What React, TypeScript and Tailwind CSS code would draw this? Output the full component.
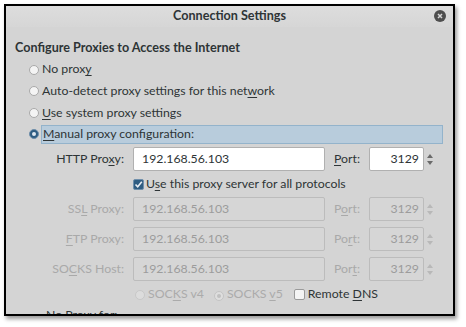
import React from 'react';

const U = ({ children }: { children: React.ReactNode }) => <span className="underline underline-offset-2">{children}</span>;

const Radio = ({ checked = false, disabled = false }: { checked?: boolean; disabled?: boolean }) => (
  <span
    className={`inline-flex items-center justify-center w-[10px] h-[10px] rounded-full shrink-0 ${
      checked
        ? disabled
          ? 'bg-[#dedede] border border-[#c4c4c4]'
          : 'bg-[#2f5d82] border border-[#6f8fab]'
        : disabled
          ? 'bg-[#dcdcdc] border border-[#c8c8c8]'
          : 'bg-[#f4f4f4] border border-[#a9a9a9]'
    }`}
  >
    {checked && <span className={`w-[4px] h-[4px] rounded-full ${disabled ? 'bg-[#c0c0c0]' : 'bg-[#dfe8f0]'}`} />}
  </span>
);

const Spinner = ({ disabled = false }: { disabled?: boolean }) => (
  <div className="w-[12px] h-full flex flex-col items-center justify-center gap-[3px]">
    <svg width="6" height="4" viewBox="0 0 6 4">
      <path d="M3 0 L6 4 L0 4 Z" fill={disabled ? '#b8b8b8' : '#6a6a6a'} />
    </svg>
    <svg width="6" height="4" viewBox="0 0 6 4">
      <path d="M0 0 L6 0 L3 4 Z" fill={disabled ? '#b8b8b8' : '#6a6a6a'} />
    </svg>
  </div>
);

interface ProxyRowProps {
  label: React.ReactNode;
  port: React.ReactNode;
  disabled?: boolean;
}

const ProxyRow: React.FC<ProxyRowProps> = ({ label, port, disabled = false }) => (
  <div className="flex items-center h-[24px]">
    <div className={`w-[118px] text-right ${disabled ? 'text-[#a9a9a9]' : 'text-[#2e3436]'}`}>{label}</div>
    <div
      className={`ml-[9px] w-[192px] h-full flex items-center pl-[8px] border rounded-[2px] ${
        disabled ? 'bg-[#d6d6d6] border-[#bcbcbc] text-[#9c9c9c]' : 'bg-white border-[#b0b0b0] text-[#2e3436]'
      }`}
    >
      192.168.56.103
    </div>
    <div className={`ml-[9px] w-[35px] ${disabled ? 'text-[#a9a9a9]' : 'text-[#2e3436]'}`}>{port}</div>
    <div
      className={`w-[55px] h-full flex items-center justify-end pr-[4px] border rounded-[2px] ${
        disabled ? 'bg-[#d6d6d6] border-[#bcbcbc] text-[#9c9c9c]' : 'bg-white border-[#b0b0b0] text-[#2e3436]'
      }`}
    >
      3129
    </div>
    <Spinner disabled={disabled} />
  </div>
);

export default function App() {
  return (
    <div className="w-[466px] h-[327px] bg-white pt-[4px] pl-[4px] overflow-hidden" style={{ fontFamily: 'Lato, "Noto Sans", sans-serif' }}>
      <div className="w-[451px] h-[312px] border-2 border-black bg-[#d4d4d4] overflow-hidden shadow-[2px_3px_4px_rgba(0,0,0,0.4)] text-[12.3px] text-[#2e3436] leading-none">
        {/* Title bar */}
        <div className="relative h-[21px] flex items-center justify-center bg-gradient-to-b from-[#dddddd] to-[#d6d6d6]">
          <span className="font-bold text-[12.6px]">Connection Settings</span>
          <span className="absolute right-[7px] top-[4px] w-[12px] h-[12px] rounded-full bg-[#4e4e4e] flex items-center justify-center">
            <svg width="6" height="6" viewBox="0 0 6 6">
              <path d="M1 1 L5 5 M5 1 L1 5" stroke="#d8d8d8" strokeWidth="1.5" />
            </svg>
          </span>
        </div>

        <div className="mt-[10px] h-[22px] flex items-center pl-[9px] font-bold text-[12.6px]">Configure Proxies to Access the Internet</div>

        <div className="flex flex-col pl-[23px]">
          <div className="h-[21px] flex items-center gap-[3px]">
            <Radio />
            <span>No prox<U>y</U></span>
          </div>
          <div className="h-[22px] flex items-center gap-[3px]">
            <Radio />
            <span>Auto-detect proxy settings for this net<U>w</U>ork</span>
          </div>
          <div className="h-[22px] flex items-center gap-[3px]">
            <Radio />
            <span><U>U</U>se system proxy settings</span>
          </div>
          <div className="h-[20px] flex items-center gap-[2px]">
            <Radio checked />
            <div className="flex-1 mr-[10px] h-[19px] flex items-center pl-[1px] bg-[#b8ccdc] border border-[#93b3cb]">
              <span><U>M</U>anual proxy configuration:</span>
            </div>
          </div>
        </div>

        <div className="mt-[3px]">
          <ProxyRow label={<span>HTTP Pro<U>x</U>y:</span>} port={<span><U>P</U>ort:</span>} />
        </div>

        <div className="h-[26px] flex items-center pl-[127px] gap-[2px]">
          <span className="w-[11px] h-[11px] rounded-[2px] bg-[#2f5d82] border border-[#6f8fab] flex items-center justify-center">
            <svg width="9" height="9" viewBox="0 0 9 9">
              <path d="M1.5 4.5 L3.7 6.8 L7.8 1.8" stroke="#e8eef4" strokeWidth="1.6" fill="none" />
            </svg>
          </span>
          <span>U<U>s</U>e this proxy server for all protocols</span>
        </div>

        <div className="flex flex-col gap-[6px]">
          <ProxyRow disabled label={<span>SS<U>L</U> Proxy:</span>} port={<span>P<U>o</U>rt:</span>} />
          <ProxyRow disabled label={<span><U>F</U>TP Proxy:</span>} port={<span>Po<U>r</U>t:</span>} />
          <ProxyRow disabled label={<span>SO<U>C</U>KS Host:</span>} port={<span>Por<U>t</U>:</span>} />
        </div>

        <div className="h-[27px] flex items-center pl-[129px]">
          <Radio disabled />
          <span className="ml-[3px] text-[#ababab]">SOC<U>K</U>S v4</span>
          <span className="ml-[10px]"><Radio checked disabled /></span>
          <span className="ml-[3px] text-[#ababab]">SOCKS <U>v</U>5</span>
          <span className="ml-[11px] w-[11px] h-[11px] rounded-[2px] bg-[#f4f4f4] border border-[#9a9a9a]" />
          <span className="ml-[3px]">Remote <U>D</U>NS</span>
        </div>

        <div className="pl-[40px] pt-[1px]">No Proxy for:</div>
      </div>
    </div>
  );
}
